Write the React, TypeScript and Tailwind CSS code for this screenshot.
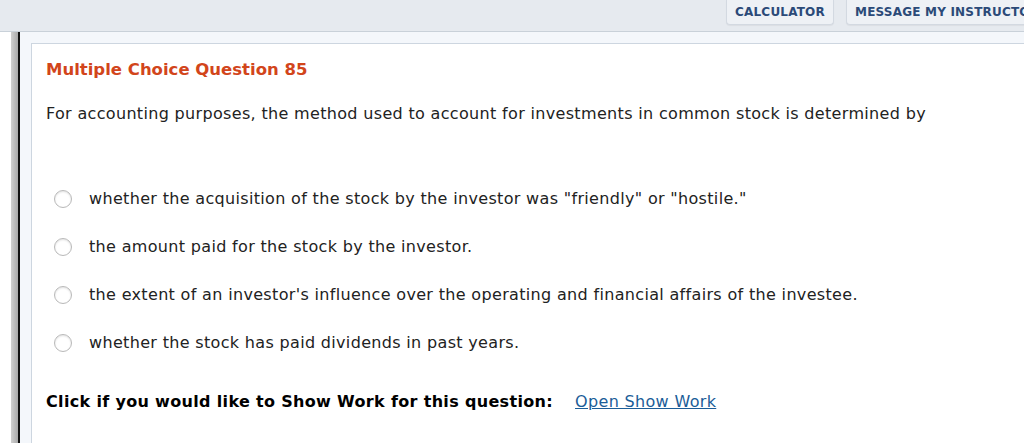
const options = [
  'whether the acquisition of the stock by the investor was "friendly" or "hostile."',
  "the amount paid for the stock by the investor.",
  "the extent of an investor's influence over the operating and financial affairs of the investee.",
  "whether the stock has paid dividends in past years.",
];

const App = () => {
  return (
    <div className="w-[1024px] h-[443px] overflow-hidden bg-white font-['DejaVu_Sans',Verdana,sans-serif] text-[#222]">
      <div className="h-[32px] bg-[#e6eaef] border-b border-[#c9d1d9] flex items-start gap-[12px] pl-[726px] overflow-hidden">
        <button className="shrink-0 h-[25px] w-[108px] bg-[#eef1f5] border border-[#d3d9e1] border-t-0 rounded-b-[4px] text-[12px] font-bold text-[#2b4a78] tracking-[0.2px] shadow-[0_1px_1px_rgba(0,0,0,0.05)]">
          CALCULATOR
        </button>
        <button className="shrink-0 h-[25px] px-[8px] bg-[#eef1f5] border border-[#d3d9e1] border-t-0 rounded-b-[4px] text-[12px] font-bold text-[#2b4a78] tracking-[0.2px] whitespace-nowrap text-left shadow-[0_1px_1px_rgba(0,0,0,0.05)]">
          MESSAGE MY INSTRUCTOR
        </button>
      </div>
      <div className="flex h-[411px]">
        <div className="w-[11px] bg-white" />
        <div className="w-[7px] bg-gradient-to-r from-[#d0d0d0] to-[#a9a9a9]" />
        <div className="w-[2px] bg-[#111]" />
        <div className="flex-1 bg-[#f4f7fb] pl-[11px] pt-[11px]">
          <div className="h-full bg-white border-l border-t border-[#cdd6e0] pl-[14px] pt-[16px] text-[16px] tracking-[0.33px]">
            <h1 className="text-[16.5px] font-bold text-[#d2451b] leading-[20px] tracking-normal">
              Multiple Choice Question 85
            </h1>
            <p className="mt-[24px] leading-[20px]">
              For accounting purposes, the method used to account for investments in common stock is determined by
            </p>
            <div className="mt-[51px] flex flex-col">
              {options.map((o) => (
                <label key={o} className="flex items-center h-[48px]">
                  <span className="ml-[8px] w-[18px] h-[18px] rounded-full border border-[#b9b9b9] bg-white shadow-[inset_0_1px_2px_rgba(0,0,0,0.12)]" />
                  <span className="ml-[17px]">{o}</span>
                </label>
              ))}
            </div>
            <div className="mt-[23px] flex items-center">
              <span className="font-bold text-black">
                Click if you would like to Show Work for this question:
              </span>
              <a href="#" className="ml-[22px] text-[#1b5d98] underline">
                Open Show Work
              </a>
            </div>
          </div>
        </div>
      </div>
    </div>
  );
};

export default App;
